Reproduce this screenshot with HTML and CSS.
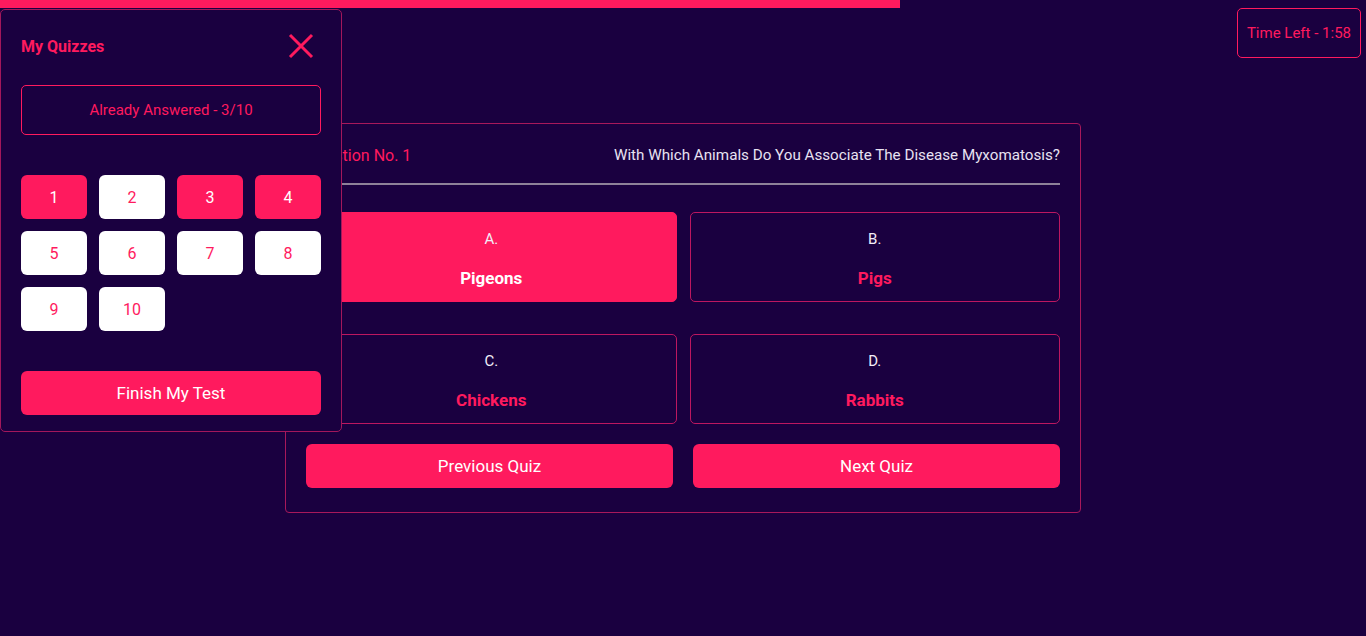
FILE: index.html
```html
<!DOCTYPE html>
<html lang="en">
<head>
<meta charset="utf-8">
<title>Quiz</title>
<link rel="stylesheet" href="styles.css">
</head>
<body>
<div class="progress"><div class="progress-fill" style="width:900px"></div></div>
<div class="topbar">
  <div class="timer">Time Left - 1:58</div>
</div>
<main class="card">
  <div class="q-head">
    <span class="q-no">Question No. 1</span>
    <span class="q-text">With Which Animals Do You Associate The Disease Myxomatosis?</span>
  </div>
  <div class="options">
    <div class="option selected"><span class="letter">A.</span><span class="answer">Pigeons</span></div>
    <div class="option"><span class="letter">B.</span><span class="answer">Pigs</span></div>
    <div class="option"><span class="letter">C.</span><span class="answer">Chickens</span></div>
    <div class="option"><span class="letter">D.</span><span class="answer">Rabbits</span></div>
  </div>
  <div class="nav">
    <button class="btn">Previous Quiz</button>
    <button class="btn">Next Quiz</button>
  </div>
</main>
<aside class="panel">
  <div class="panel-head">
    <h2 class="panel-title">My Quizzes</h2>
    <svg class="close" width="26" height="26" viewBox="0 0 26 26"><path d="M2 2 L24 24 M24 2 L2 24" stroke="#ff1a5e" stroke-width="3" fill="none"/></svg>
  </div>
  <div class="answered">Already Answered - 3/10</div>
  <div class="grid">
    <div class="num done">1</div>
    <div class="num">2</div>
    <div class="num done">3</div>
    <div class="num done">4</div>
    <div class="num">5</div>
    <div class="num">6</div>
    <div class="num">7</div>
    <div class="num">8</div>
    <div class="num">9</div>
    <div class="num">10</div>
  </div>
  <button class="btn finish">Finish My Test</button>
</aside>
</body>
</html>
```
FILE: styles.css
```css
* { box-sizing: border-box; }
html, body { margin: 0; padding: 0; }
body {
  background: #1a0040;
  font-family: Roboto, "Liberation Sans", sans-serif;
  color: #fff;
  height: 636px;
  overflow: hidden;
}
.progress { height: 8px; }
.progress-fill { height: 8px; background: #ff1a5e; }
.topbar { display: flex; justify-content: flex-end; padding-right: 5px; }
.timer {
  border: 1px solid #ff1a5e;
  border-radius: 5px;
  color: #ff1a5e;
  font-size: 15px;
  height: 50px;
  padding: 0 9px 0 9px;
  display: flex;
  align-items: center;
}
.card {
  width: 796px;
  margin: 65px auto 0;
  border: 1px solid #a8185b;
  border-radius: 4px;
  padding: 20px 20px 24px;
}
.q-head {
  display: flex;
  justify-content: space-between;
  align-items: center;
  height: 22px;
  margin-bottom: 17px;
}
.q-no { color: #ff1a5e; font-size: 16px; }
.q-text { color: #e8e2f2; font-size: 15.2px; }
.options {
  border-top: 2px solid #8e8199;
  padding-top: 27px;
  display: grid;
  grid-template-columns: 1fr 1fr;
  column-gap: 13px;
  row-gap: 32px;
}
.option {
  height: 90px;
  border: 1px solid #bd1760;
  border-radius: 5px;
  display: flex;
  flex-direction: column;
  align-items: center;
  padding-top: 16px;
}
.option.selected { background: #ff1a5e; border-color: #ff1a5e; }
.letter { font-size: 15px; line-height: 20px; color: #f2eef8; }
.answer { font-size: 17px; font-weight: 700; line-height: 22px; margin-top: 18px; color: #ff1a5e; }
.option.selected .answer { color: #fff; }
.nav {
  margin-top: 20px;
  display: grid;
  grid-template-columns: 1fr 1fr;
  column-gap: 20px;
}
.btn {
  height: 44px;
  border: none;
  border-radius: 6px;
  background: #ff1a5e;
  color: #fff;
  font-family: inherit;
  font-size: 17px;
}
.panel {
  position: absolute;
  left: 0;
  top: 9px;
  width: 342px;
  height: 423px;
  background: #1a0040;
  border: 1px solid #a3175b;
  border-radius: 5px;
  padding: 20px;
}
.panel-head {
  display: flex;
  justify-content: space-between;
  align-items: center;
  height: 32px;
}
.panel-title { margin: 0; font-size: 16px; color: #ff1a5e; font-weight: 700; }
.close { margin-right: 7px; }
.answered {
  margin-top: 23px;
  height: 50px;
  border: 1px solid #ff1a5e;
  border-radius: 5px;
  color: #ff1a5e;
  font-size: 15px;
  display: flex;
  align-items: center;
  justify-content: center;
}
.grid {
  margin-top: 40px;
  display: grid;
  grid-template-columns: repeat(4, 66px);
  column-gap: 12px;
  row-gap: 12px;
}
.num {
  height: 44px;
  background: #fff;
  border-radius: 6px;
  color: #ff1a5e;
  font-size: 16px;
  display: flex;
  align-items: center;
  justify-content: center;
}
.num.done { background: #ff1a5e; color: #fff; }
.finish { width: 100%; margin-top: 40px; }
```
